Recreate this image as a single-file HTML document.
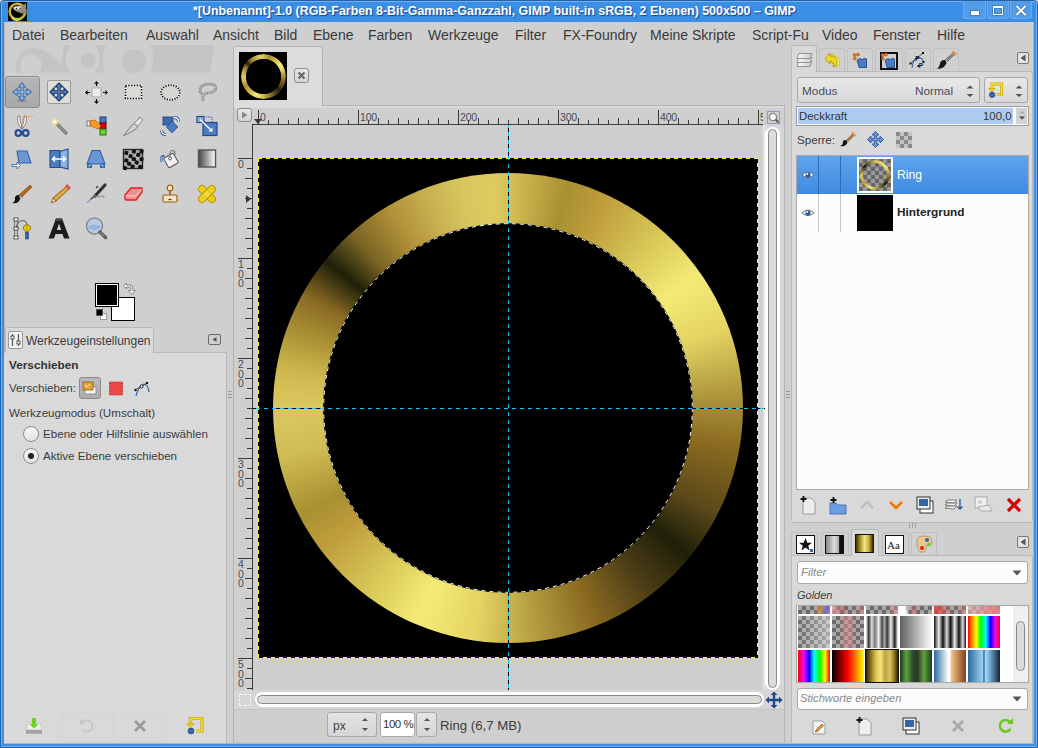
<!DOCTYPE html>
<html><head><meta charset="utf-8">
<style>
*{margin:0;padding:0;box-sizing:border-box}
html,body{width:1038px;height:748px;overflow:hidden;background:#cfcfcf;font-family:"Liberation Sans",sans-serif;font-size:13px;color:#3c3c3c}
.a{position:absolute}
.t{position:absolute;white-space:nowrap;line-height:1}
.m{position:absolute;top:28px;font-size:14px;line-height:1;color:#3a3a3a;white-space:nowrap}
svg{position:absolute;overflow:visible}
</style></head><body>
<div class="a" style="left:0px;top:0px;width:1038px;height:748px;background:#3a8ee6;border:1px solid #2362aa;border-radius:4px 4px 0 0"></div>
<div class="a" style="left:1px;top:1px;width:1036px;height:746px;border:1px solid #74b2f0;border-radius:3px 3px 0 0"></div>
<div class="a" style="left:4px;top:22px;width:1030px;height:722px;background:#cfcfcf;border:1px solid #bcb4ac;border-top-color:#d4ccc4"></div>
<div class="a" style="left:8px;top:2px;width:19px;height:19px;background:#000"></div>
<svg style="left:8px;top:2px;" width="19" height="19" viewBox="0 0 19 19"><circle cx="9.5" cy="9.4" r="7.8" fill="none" stroke="#d4b43a" stroke-width="2.4"/><path d="M3.5 16 A7.8 7.8 0 0 0 13 17" fill="none" stroke="#f0dc60" stroke-width="1.2"/><path d="M5 5.5 Q9 2.5 15 3.5 L18 1 L18.5 12.5 Q14 11.5 11 10.5 Q6.5 9.5 5 5.5Z" fill="#8e8a80"/><ellipse cx="7.8" cy="6.2" rx="2" ry="1.6" fill="#f4f4f4"/><ellipse cx="11.5" cy="5.8" rx="2" ry="1.6" fill="#f4f4f4"/><circle cx="8.3" cy="6.6" r=".8" fill="#111"/><circle cx="12" cy="6.2" r=".8" fill="#111"/><circle cx="15.5" cy="9.5" r="1" fill="#e07020"/></svg>
<div class="t" style="left:193px;top:5px;color:#fff;font-weight:bold;font-size:12.4px;text-shadow:1px 1px 1px rgba(10,30,90,.7)">*[Unbenannt]-1.0 (RGB-Farben 8-Bit-Gamma-Ganzzahl, GIMP built-in sRGB, 2 Ebenen) 500x500 – GIMP</div>
<div class="a" style="left:963px;top:1px;width:23px;height:18px;background:#539de8;border:1px solid #68aaee;border-top:none;border-radius:0 0 3px 3px"></div>
<div class="a" style="left:987px;top:1px;width:22px;height:18px;background:#539de8;border:1px solid #68aaee;border-top:none;border-radius:0 0 3px 3px"></div>
<div class="a" style="left:1010px;top:1px;width:22px;height:18px;background:#539de8;border:1px solid #68aaee;border-top:none;border-radius:0 0 3px 3px"></div>
<div class="a" style="left:971px;top:11px;width:8px;height:4px;background:#fff;box-shadow:0 0 0 .6px #3a6aa0"></div>
<div class="a" style="left:993px;top:6px;width:10px;height:9px;border:1.6px solid #fff;border-top-width:2.4px;box-shadow:0 0 0 .6px #3a6aa0, inset 0 0 0 .6px #3a6aa0"></div>
<svg style="left:1015px;top:5px;" width="12" height="11" viewBox="0 0 12 11"><path d="M1.5 1L10.5 10M10.5 1L1.5 10" stroke="#3a6aa0" stroke-width="3.2"/><path d="M1.5 1L10.5 10M10.5 1L1.5 10" stroke="#fff" stroke-width="2"/></svg>
<div class="m" style="left:12px">Datei</div>
<div class="m" style="left:60px">Bearbeiten</div>
<div class="m" style="left:146px">Auswahl</div>
<div class="m" style="left:213px">Ansicht</div>
<div class="m" style="left:274px">Bild</div>
<div class="m" style="left:313px">Ebene</div>
<div class="m" style="left:368px">Farben</div>
<div class="m" style="left:428px">Werkzeuge</div>
<div class="m" style="left:515px">Filter</div>
<div class="m" style="left:563px">FX-Foundry</div>
<div class="m" style="left:650px">Meine Skripte</div>
<div class="m" style="left:752px">Script-Fu</div>
<div class="m" style="left:822px">Video</div>
<div class="m" style="left:873px">Fenster</div>
<div class="m" style="left:937px">Hilfe</div>
<svg style="left:0px;top:40px;" width="230" height="36" viewBox="0 0 230 36"><defs><clipPath id="wb"><rect x="0" y="5.1" width="230" height="27.6"/></clipPath></defs><g clip-path="url(#wb)"><path d="M15.4 32.7 C15.4 16 22 8.1 32.3 8.1 C45 8.1 55 17 61.2 25 L64.3 5.1 L214.6 5.1 L210.4 32.7 Z" fill="#c4c4c4"/>
<circle cx="30.9" cy="25.4" r="10.9" fill="#cfcfcf"/>
<ellipse cx="82.7" cy="19" rx="17" ry="18.5" fill="#cfcfcf"/><ellipse cx="128" cy="19" rx="25.4" ry="28" fill="#cfcfcf"/>
<circle cx="88.2" cy="20.6" r="7.5" fill="#c4c4c4"/><circle cx="134.2" cy="21.4" r="12.1" fill="#c4c4c4"/></g></svg>
<div class="a" style="left:5px;top:76px;width:35px;height:32px;border:1px solid #8e8e8e;border-radius:3px;background:linear-gradient(#b6b6b6,#a8a8a8);box-shadow:inset 0 1px 0 #c4c4c4"></div>
<svg style="left:9.5px;top:79.5px;" width="24" height="24" viewBox="0 0 24 24"><ellipse cx="12" cy="20.5" rx="5" ry="1.6" fill="#555" opacity=".3"/><path d="M12 2.5 L15.4 7.2 L13 7.2 L13 11 L16.8 11 L16.8 8.6 L21.5 12 L16.8 15.4 L16.8 13 L13 13 L13 16.8 L15.4 16.8 L12 21.5 L8.6 16.8 L11 16.8 L11 13 L7.2 13 L7.2 15.4 L2.5 12 L7.2 8.6 L7.2 11 L11 11 L11 7.2 L8.6 7.2Z" fill="#80aee0" stroke="#2c5ca2" stroke-width=".9" stroke-linejoin="miter"/><path d="M12 5v14M5 12h14" stroke="#a8c8ec" stroke-width=".6"/></svg>
<div class="a" style="left:47px;top:80px;width:24px;height:24px;border:1px solid #9a9a98;border-radius:2px;background:#deded9"></div>
<svg style="left:46.5px;top:79.5px;" width="24" height="24" viewBox="0 0 24 24"><path d="M12 3 L16 7 L13.2 7 L13.2 10.8 L17 10.8 L17 8 L21 12 L17 16 L17 13.2 L13.2 13.2 L13.2 17 L16 17 L12 21 L8 17 L10.8 17 L10.8 13.2 L7 13.2 L7 16 L3 12 L7 8 L7 10.8 L10.8 10.8 L10.8 7 L8 7Z" fill="#4a78b4" stroke="#1e3c6a" stroke-width="1.2" stroke-linejoin="miter"/><path d="M12 5v14M5 12h14" stroke="#6890c4" stroke-width=".8"/></svg>
<svg style="left:84px;top:79.5px;" width="24" height="24" viewBox="0 0 24 24"><rect x="8" y="8" width="9" height="9" rx="1" fill="#ededed" stroke="#aaa"/><path d="M12.5 2v4M12.5 19v4M2 12.5h4M19 12.5h4" stroke="#000" stroke-width="1.2"/><path d="M10.5 3.5l2-2 2 2M10.5 21.5l2 2 2-2M3.5 10.5l-2 2 2 2M21.5 10.5l2 2-2 2" fill="#000" stroke="#000" stroke-width=".8"/></svg>
<svg style="left:121px;top:79.5px;" width="24" height="24" viewBox="0 0 24 24"><rect x="4.5" y="5.5" width="16" height="13" fill="#d9dad6" stroke="#fff" stroke-width="1.6"/><rect x="4.5" y="5.5" width="16" height="13" fill="none" stroke="#000" stroke-width="1.6" stroke-dasharray="1.4 1.4"/></svg>
<svg style="left:158px;top:79.5px;" width="24" height="24" viewBox="0 0 24 24"><ellipse cx="12.5" cy="12.5" rx="9.3" ry="7.3" fill="#d6d7d3" stroke="#fff" stroke-width="1.8"/><ellipse cx="12.5" cy="12.5" rx="9.3" ry="7.3" fill="none" stroke="#111" stroke-width="1.8" stroke-dasharray="1.3 1.3"/></svg>
<svg style="left:195px;top:79.5px;" width="24" height="24" viewBox="0 0 24 24"><path d="M9 21 Q6 18 9 15 Q4 13 5 9 Q7 4 14 4 Q21 4 21 8 Q21 12 13 13 Q8 14 9 15" fill="none" stroke="#888884" stroke-width="2.4"/><path d="M9 21 Q6 18 9 15 Q4 13 5 9 Q7 4 14 4 Q21 4 21 8 Q21 12 13 13 Q8 14 9 15" fill="none" stroke="#e4e4e0" stroke-width="1" stroke-dasharray="1.6 .9"/></svg>
<svg style="left:9.5px;top:113.5px;" width="24" height="24" viewBox="0 0 24 24"><path d="M8 2 Q6 9 12 15 L13 14 Q9 8 10 2Z M16 2 Q18 9 12 15 L11 14 Q15 8 14 2Z" fill="#f6f6f6" stroke="#7a7a7a" stroke-width=".9" stroke-linejoin="round"/><circle cx="8.3" cy="19" r="2.8" fill="none" stroke="#24509a" stroke-width="2.2"/><circle cx="15.7" cy="19" r="2.8" fill="none" stroke="#24509a" stroke-width="2.2"/><path d="M10.5 16 L9.5 17 M13.5 16 L14.5 17" stroke="#24509a" stroke-width="1.6"/><path d="M12.5 11 Q12.5 3 16 2.5 L23 2.5" stroke="#f08a1e" stroke-width="1.1" stroke-dasharray="1.3 1" fill="none"/></svg>
<svg style="left:46.5px;top:113.5px;" width="24" height="24" viewBox="0 0 24 24"><path d="M9 9 L19 19" stroke="#505850" stroke-width="3" stroke-linecap="round"/><path d="M9 9 L19 19" stroke="#a8aca0" stroke-width="1.4" stroke-linecap="round"/><circle cx="8" cy="8" r="3.5" fill="#ffef90" opacity=".6"/><circle cx="8" cy="8" r="1.8" fill="#fffde0"/></svg>
<svg style="left:84px;top:113.5px;" width="24" height="24" viewBox="0 0 24 24"><rect x="16" y="3" width="6" height="6" fill="#4a78b8" stroke="#203d70"/><rect x="16" y="9" width="6" height="6" fill="#d60010" stroke="#7a0008"/><rect x="16" y="15" width="6" height="6" fill="#6ad030" stroke="#287010"/><rect x="3" y="7" width="3" height="5" fill="#fff" stroke="#777"/><path d="M6 7 L11 6 L17 12 L14 15 L7 12Z" fill="#f89c28" stroke="#c86000" stroke-width=".8"/></svg>
<svg style="left:121px;top:113.5px;" width="24" height="24" viewBox="0 0 24 24"><path d="M2.5 22 L10 12 L14 9 L17 12 L14 16Z" fill="#cfcfcb" stroke="#7a7a76" stroke-width=".9" stroke-linejoin="round"/><path d="M13 9.5 L19 3 L22 6 L16.5 12Z" fill="#e8e8e4" stroke="#7a7a76" stroke-width=".9"/><path d="M16 6 L19 4.5" stroke="#aaa" stroke-width="1.2"/></svg>
<svg style="left:158px;top:113.5px;" width="24" height="24" viewBox="0 0 24 24"><rect x="5" y="3" width="10" height="8" fill="#3a6ab0" stroke="#244a88" stroke-width=".9"/><rect x="10" y="9" width="8" height="8" transform="rotate(45 14 13)" fill="#4a7cc0" stroke="#244a88" stroke-width=".9"/><path d="M16 3.5 Q20 3.5 20.5 7.5" fill="none" stroke="#244a88" stroke-width="3"/><path d="M16 3.5 Q20 3.5 20.5 7.5" fill="none" stroke="#fff" stroke-width="1.3"/><path d="M8 20.5 Q4 20.5 3.5 16.5" fill="none" stroke="#244a88" stroke-width="3"/><path d="M8 20.5 Q4 20.5 3.5 16.5" fill="none" stroke="#fff" stroke-width="1.3"/></svg>
<svg style="left:195px;top:113.5px;" width="24" height="24" viewBox="0 0 24 24"><rect x="8" y="8.5" width="14" height="13" fill="#4a7cc0" stroke="#244a88" stroke-width="1.2"/><rect x="2" y="2.5" width="7" height="6" fill="#8ab0e0" stroke="#244a88" stroke-width="1.2"/><path d="M5 5.5 L17 17" stroke="#fff" stroke-width="1.3"/><path d="M13.5 17.5 L17.5 17.5 L17.5 13.5Z" fill="#fff"/><path d="M11 3 h6 v6" stroke="#244a88" stroke-dasharray="1 1" fill="none"/></svg>
<svg style="left:9.5px;top:147px;" width="24" height="24" viewBox="0 0 24 24"><path d="M7 4 L17 4 L21 16 L9 16Z" fill="#6a98d4" stroke="#3465a4" stroke-width="1.1"/><path d="M2 17.5 L7 17.5 L7 15 L10.5 18.5 L7 22 L7 19.5 L2 19.5Z" fill="#fff" stroke="#3465a4" stroke-width=".9"/></svg>
<svg style="left:46.5px;top:147px;" width="24" height="24" viewBox="0 0 24 24"><path d="M3 3.5 L13 3.5 L13 20.5 L3 20.5Z" fill="#4a7cc0" stroke="#244a88" stroke-width="1.1"/><path d="M13 4.5 L21 2 L21 22 L13 20Z" fill="#8ab4e4" stroke="#244a88" stroke-width="1.1"/><path d="M6 12 h12 M8 9.5 l-2.5 2.5 2.5 2.5 M16 9.5 l2.5 2.5 -2.5 2.5" stroke="#fff" stroke-width="1.6" fill="none"/></svg>
<svg style="left:84px;top:147px;" width="24" height="24" viewBox="0 0 24 24"><path d="M8 3.5 L16 3.5 L21 17 L3 17Z" fill="#6a98d4" stroke="#3465a4" stroke-width="1.1"/><rect x="3" y="16" width="5" height="5" fill="#3a6ab0"/><rect x="16" y="16" width="5" height="5" fill="#3a6ab0"/><path d="M4.5 19.5 l2 -2 M17.5 17.5 l2 2" stroke="#fff"/></svg>
<svg style="left:121px;top:147px;" width="24" height="24" viewBox="0 0 24 24"><rect x="2.5" y="2.5" width="19" height="19" fill="#b0b0ac" stroke="#2a2a2a" stroke-width="1.4"/><svg x="3.2" y="3.2" width="17.6" height="17.6" viewBox="3.2 3.2 17.6 17.6"><rect x="3.4" y="3.9" width="3.9" height="3.9" rx=".8" transform="rotate(15 5.3 5.8)" fill="#111"/><rect x="3.4" y="11.5" width="3.9" height="3.9" rx=".8" transform="rotate(15 5.3 13.4)" fill="#111"/><rect x="2.1" y="19.1" width="3.9" height="3.9" rx=".8" transform="rotate(15 4.0 21.0)" fill="#111"/><rect x="7.7" y="7.2" width="3.9" height="3.9" rx=".8" transform="rotate(15 9.6 9.1)" fill="#111"/><rect x="6.2" y="14.8" width="3.9" height="3.9" rx=".8" transform="rotate(15 8.1 16.7)" fill="#111"/><rect x="11.0" y="2.5" width="3.9" height="3.9" rx=".8" transform="rotate(15 12.9 4.4)" fill="#111"/><rect x="11.0" y="10.1" width="3.9" height="3.9" rx=".8" transform="rotate(15 12.9 12.0)" fill="#111"/><rect x="9.7" y="17.7" width="3.9" height="3.9" rx=".8" transform="rotate(15 11.6 19.6)" fill="#111"/><rect x="15.3" y="5.9" width="3.9" height="3.9" rx=".8" transform="rotate(15 17.2 7.8)" fill="#111"/><rect x="13.8" y="13.5" width="3.9" height="3.9" rx=".8" transform="rotate(15 15.7 15.4)" fill="#111"/><rect x="18.6" y="2.7" width="3.9" height="3.9" rx=".8" transform="rotate(15 20.5 4.6)" fill="#111"/><rect x="18.6" y="10.3" width="3.9" height="3.9" rx=".8" transform="rotate(15 20.5 12.2)" fill="#111"/><rect x="17.3" y="17.9" width="3.9" height="3.9" rx=".8" transform="rotate(15 19.2 19.8)" fill="#111"/></svg></svg>
<svg style="left:158px;top:147px;" width="24" height="24" viewBox="0 0 24 24"><path d="M3.5 9 L6.5 9 M3.5 9 V15" stroke="#3d6aa6" stroke-width="2.2" fill="none"/><path d="M3.5 9 V15" stroke="#7aa0d8" stroke-width="1"/><rect x="7.5" y="8" width="11" height="11" rx="1" transform="rotate(-30 13 13.5)" fill="#f2f2f2" stroke="#555" stroke-width="1"/><circle cx="12" cy="11.5" r="1.5" fill="none" stroke="#666"/><path d="M12 10 Q11.5 3.5 14.5 3.5 Q17.5 3.5 17 8" fill="none" stroke="#777" stroke-width="1.1"/></svg>
<svg style="left:195px;top:147px;" width="24" height="24" viewBox="0 0 24 24"><defs><linearGradient id="bl" x1="0" x2="1"><stop offset="0" stop-color="#444"/><stop offset="1" stop-color="#fff"/></linearGradient></defs><rect x="3.5" y="3" width="17" height="17" fill="url(#bl)" stroke="#555" stroke-width="1.4"/></svg>
<svg style="left:9.5px;top:181.5px;" width="24" height="24" viewBox="0 0 24 24"><path d="M20 3 L22 5 L12 15 L9 13Z" fill="#b06a20" stroke="#7a4410" stroke-width=".6"/><path d="M9 13 L12 16 L10 17Z" fill="#ccc" stroke="#888" stroke-width=".6"/><path d="M9 13 Q4 13 5 18 Q4 21 2 21 Q9 22 10 17Z" fill="#111"/></svg>
<svg style="left:46.5px;top:181.5px;" width="24" height="24" viewBox="0 0 24 24"><path d="M20 4 L22 7 L9 19 L6 16Z" fill="#e0a840" stroke="#8a5a10" stroke-width="1"/><path d="M19 3 L23 7" stroke="#e05060" stroke-width="3"/><path d="M6 16 L9 19 L4 21Z" fill="#f0d8a0" stroke="#8a5a10" stroke-width=".8"/></svg>
<svg style="left:84px;top:181.5px;" width="24" height="24" viewBox="0 0 24 24"><path d="M21 3 L11 14" stroke="#333" stroke-width="3.2" stroke-linecap="round"/><path d="M12 13 L8 17 Q6 18 7 16Z" fill="#ccc" stroke="#555"/><path d="M11 14 Q14 16 18 14 Q21 14 20 16" fill="none" stroke="#888"/><path d="M7 17 L3 21" stroke="#5a90d0" stroke-width="1.5" opacity=".7"/><path d="M14 4 L12 6" stroke="#444" stroke-width="1.4"/></svg>
<svg style="left:121px;top:181.5px;" width="24" height="24" viewBox="0 0 24 24"><path d="M4 13 L10 6 L21 6 L21 10 L15 18 L5 18 L4 17Z" fill="#f29090" stroke="#e02020" stroke-width="1.4" stroke-linejoin="round"/><path d="M4 14 L15 14 L21 7" fill="none" stroke="#fff" stroke-width=".8" opacity=".7"/></svg>
<svg style="left:158px;top:181.5px;" width="24" height="24" viewBox="0 0 24 24"><circle cx="12" cy="6" r="2.8" fill="#f4e8c8" stroke="#a06010" stroke-width="1.2"/><path d="M12 9 v4" stroke="#a06010" stroke-width="1.6"/><rect x="5" y="13" width="14" height="7" rx="1.5" fill="#f0e6c6" stroke="#a06010" stroke-width="1.2"/><path d="M10 17 h4 l-2 1.5z" fill="#222"/></svg>
<svg style="left:195px;top:181.5px;" width="24" height="24" viewBox="0 0 24 24"><g fill="#ecd020" stroke="#b89a00" stroke-width="1"><rect x="1.5" y="8.5" width="21" height="7" rx="3.5" transform="rotate(45 12 12)"/><rect x="1.5" y="8.5" width="21" height="7" rx="3.5" transform="rotate(-45 12 12)"/></g><rect x="9" y="9" width="6" height="6" transform="rotate(45 12 12)" fill="#f4dc40" stroke="#c8a800" stroke-width=".6"/></svg>
<svg style="left:9.5px;top:216px;" width="24" height="24" viewBox="0 0 24 24"><path d="M6 3 V22" stroke="#333" stroke-width="3"/><path d="M6 3 V22" stroke="#fff" stroke-width="1.4"/><rect x="4" y="2" width="4" height="3" fill="#fff" stroke="#333" stroke-width=".8"/><rect x="4" y="11" width="4" height="3" fill="#fff" stroke="#333" stroke-width=".8"/><rect x="4" y="20" width="4" height="3" fill="#fff" stroke="#333" stroke-width=".8"/><path d="M6 12 Q8 3 15 5 Q17 6 17 10" fill="none" stroke="#555" stroke-width="1"/><path d="M13.5 13 Q13 9 17 9 Q21 9 20.5 13 L17 16.5Z" fill="#f4d400" stroke="#806000" stroke-width=".9"/><path d="M17 10.5 V14" stroke="#806000" stroke-width=".8"/><rect x="15.5" y="16" width="3" height="7" fill="#3465a4" stroke="#1a3a70" stroke-width=".6"/></svg>
<svg style="left:46.5px;top:216px;" width="24" height="24" viewBox="0 0 24 24"><path d="M1.5 22.5 L9 2.5 L15 2.5 L22.5 22.5 L17 22.5 L15.5 18 L8.5 18 L7 22.5Z M9.8 14 L14.2 14 L12 7.5Z" fill="#1c1c1c" fill-rule="evenodd"/><path d="M9 2.5 L15 2.5 L16 5 L8 5Z" fill="#444"/></svg>
<svg style="left:84px;top:216px;" width="24" height="24" viewBox="0 0 24 24"><circle cx="10.5" cy="10" r="8" fill="#b4cce8" stroke="#8a8a8a" stroke-width="1.5"/><path d="M3.5 10.5 Q10.5 7 17.5 10.5 L17.5 11 Q10.5 17 3.5 11Z" fill="#98b4dc"/><path d="M16 16 L21.5 21.5" stroke="#5a5a5a" stroke-width="3.4" stroke-linecap="round"/><path d="M16.5 16.5 L21 21" stroke="#bbb" stroke-width="1.2" stroke-dasharray="1 1"/></svg>
<div class="a" style="left:111px;top:297px;width:24px;height:24px;background:#fff;border:1px solid #000"></div>
<div class="a" style="left:95px;top:283px;width:24px;height:24px;background:#000;border:1px solid #000;box-shadow:inset 0 0 0 1px #fff"></div>
<div class="a" style="left:100px;top:313px;width:7px;height:7px;background:#fff;border:1px solid #999"></div>
<div class="a" style="left:96px;top:309px;width:7px;height:7px;background:#000;border:1px solid #555"></div>
<svg style="left:123px;top:281px;" width="14" height="15" viewBox="0 0 14 15"><path d="M0.5 5 L3.5 2 L3.5 4 L6.5 4 Q9.8 4 9.8 7 L9.8 9.5 L12.3 9.5 L8.8 13.5 L5.3 9.5 L7.8 9.5 L7.8 7 Q7.8 6 6.5 6 L3.5 6 L3.5 8Z" fill="#fafafa" stroke="#7a7a7a" stroke-width=".9" stroke-linejoin="round"/></svg>
<div class="a" style="left:4px;top:352px;width:223px;height:391px;background:#d9d9d9;border:1px solid #b9b9b9;border-bottom:none;border-left-color:#dcdcdc"></div>
<div class="a" style="left:5px;top:327px;width:149px;height:26px;background:#d9d9d9;border:1px solid #b9b9b9;border-bottom:none;border-radius:3px 3px 0 0"></div>
<div class="a" style="left:8px;top:331px;width:15px;height:18px;border:1px solid #999;border-radius:2px;background:#f2f2f2"></div>
<svg style="left:8px;top:331px;" width="15" height="18" viewBox="0 0 15 18"><path d="M4.5 3v12M10.5 3v12" stroke="#555" stroke-width="1.2"/><rect x="3" y="5" width="3" height="3" fill="#fff" stroke="#555"/><rect x="9" y="10" width="3" height="3" fill="#fff" stroke="#555"/></svg>
<div class="t" style="left:26px;top:335px;font-size:12px;color:#3a3a3a">Werkzeugeinstellungen</div>
<div class="a" style="left:208px;top:334px;width:13px;height:11px;border:1px solid #6a6a6a;border-radius:2px"></div>
<svg style="left:208px;top:334px;" width="13" height="11" viewBox="0 0 13 11"><path d="M8.5 3 L4.5 5.5 L8.5 8Z" fill="#555"/></svg>
<div class="t" style="left:9px;top:360px;font-weight:bold;font-size:11.8px;color:#333">Verschieben</div>
<div class="t" style="left:9px;top:382px;font-size:11.6px">Verschieben:</div>
<div class="a" style="left:79px;top:377px;width:22px;height:22px;border:1px solid #8a8a8a;border-radius:3px;background:linear-gradient(#bababa,#acacac)"></div>
<svg style="left:79px;top:377px;" width="22" height="22" viewBox="0 0 22 22"><rect x="6" y="10" width="11" height="7" fill="#f4f4f4" stroke="#888" stroke-width=".8"/><rect x="4" y="5" width="10" height="8" fill="#e8a030" stroke="#806020" stroke-width=".8"/><path d="M6 8 l2 2 3-3" stroke="#fff" stroke-width=".8" fill="none"/></svg>
<svg style="left:108px;top:380px;" width="16" height="16" viewBox="0 0 16 16"><rect x="1.5" y="2" width="13" height="13" fill="#e84848" stroke="#c02020" stroke-width="1" stroke-dasharray="1 1"/></svg>
<svg style="left:133px;top:379px;" width="18" height="18" viewBox="0 0 18 18"><path d="M3 17 Q5 8 11 5 Q15 6 16 13" fill="none" stroke="#3465a4" stroke-width="1.2"/><path d="M2 11 L14 4" stroke="#333" stroke-width=".8"/><circle cx="2.5" cy="11" r="1.2" fill="#111"/><circle cx="14" cy="4" r="1.2" fill="#111"/><circle cx="8.5" cy="7.5" r="1.5" fill="#fff" stroke="#111"/></svg>
<div class="t" style="left:9px;top:407px;font-size:11.6px">Werkzeugmodus (Umschalt)</div>
<div class="a" style="left:23px;top:426px;width:16px;height:16px;border:1px solid #8a8a8a;border-radius:50%;background:linear-gradient(#f8f8f8,#e2e2e2)"></div>
<div class="t" style="left:43px;top:428px;font-size:11.6px">Ebene oder Hilfslinie auswählen</div>
<div class="a" style="left:23px;top:448px;width:16px;height:16px;border:1px solid #8a8a8a;border-radius:50%;background:linear-gradient(#f8f8f8,#e2e2e2)"></div>
<div class="a" style="left:28px;top:453px;width:6px;height:6px;border-radius:50%;background:#1e1e1e"></div>
<div class="t" style="left:43px;top:450px;font-size:11.6px">Aktive Ebene verschieben</div>
<div class="a" style="left:62px;top:712px;width:52px;height:30px;border:1px solid #d4d4d4;border-radius:2px"></div>
<div class="a" style="left:114px;top:712px;width:52px;height:30px;border:1px solid #d4d4d4;border-radius:2px"></div>
<svg style="left:22px;top:714px;" width="24" height="24" viewBox="0 0 24 24"><path d="M4 16 L5 10 Q12 7 19 10 L20 16Z" fill="#ececec" stroke="#9a9a9a" stroke-width=".8" stroke-dasharray="1.2 1.2"/><rect x="4" y="16" width="16" height="3.8" fill="#a4a4a4"/><path d="M10 4 h4 v6 h2.5 L12 14.5 L7.5 10 H10Z" fill="#6ad41e"/></svg>
<svg style="left:75px;top:714px;" width="24" height="24" viewBox="0 0 24 24"><path d="M8 8 A5.5 5.5 0 1 1 8 16" fill="none" stroke="#c6c6c2" stroke-width="2"/><path d="M5 5 L10 9 L5 11Z" fill="#c6c6c2"/></svg>
<svg style="left:128px;top:714px;" width="24" height="24" viewBox="0 0 24 24"><path d="M7 7 L17 17 M17 7 L7 17" stroke="#9a9a9a" stroke-width="2.8"/></svg>
<svg style="left:183px;top:714px;" width="24" height="24" viewBox="0 0 24 24"><path d="M13 17 H19 V4.5 H7.5 V10" fill="none" stroke="#c8a800" stroke-width="3.2"/><path d="M13 17 H19 V4.5 H7.5 V10" fill="none" stroke="#f6e040" stroke-width="1.6"/><path d="M3.8 9.8 L11.2 9.8 L7.5 13.6Z" fill="#f0d020" stroke="#c8a800" stroke-width=".8"/><circle cx="8" cy="17" r="2.9" fill="#3a6ab0" stroke="#1e4488" stroke-width=".8"/></svg>
<div class="a" style="left:228px;top:391px;width:4px;height:1px;background:#9a9a9a"></div>
<div class="a" style="left:228px;top:394px;width:4px;height:1px;background:#9a9a9a"></div>
<div class="a" style="left:228px;top:397px;width:4px;height:1px;background:#9a9a9a"></div>
<div class="a" style="left:226px;top:352px;width:1px;height:391px;background:#b9b9b9"></div>
<div class="a" style="left:233px;top:46px;width:90px;height:61px;background:#dcdcdc;border:1px solid #b5b5b5;border-bottom:none;border-radius:3px 3px 0 0"></div>
<div class="a" style="left:233px;top:105px;width:552px;height:638px;background:#d9d9d9;border:1px solid #b3b3b3;border-bottom-color:#c8c8c8"></div>
<div class="a" style="left:234px;top:105px;width:88px;height:3px;background:#dcdcdc"></div>
<div class="a" style="left:239px;top:52px;width:48px;height:48px;background:#000"></div>
<div class="a" style="left:240.5px;top:53.5px;width:45px;height:45px;border-radius:50%;background:conic-gradient(from 0deg,#d6c058 0deg,#a89030 15deg,#bf9d3c 25deg,#d6c656 40deg,#f5ea78 55deg,#e4d462 70deg,#b39c40 85deg,#8a6a20 100deg,#5a4818 117deg,#1e2008 129deg,#4a3c16 142deg,#8a6a20 158deg,#b39c40 173deg,#e4d462 188deg,#f5ea78 203deg,#d6c656 218deg,#bf9d3c 233deg,#a89030 243deg,#d0bc54 258deg,#dcc860 270deg,#d0b850 279deg,#b09838 288deg,#8a6a24 299deg,#1e2008 309deg,#7a6424 318deg,#b09038 329deg,#c8b050 339deg,#d6c65e 348deg,#dccc60 356deg,#d6c058 360deg);-webkit-mask:radial-gradient(circle,transparent 17.2px,#000 18px);mask:radial-gradient(circle,transparent 17.2px,#000 18px)"></div>
<div class="a" style="left:294px;top:68px;width:15px;height:15px;border:1px solid #8c8c8c;border-radius:3px;background:linear-gradient(#e8e8e8,#d4d4d4)"></div>
<svg style="left:294px;top:68px;" width="15" height="15" viewBox="0 0 15 15"><path d="M4.5 4.5 L10.5 10.5 M10.5 4.5 L4.5 10.5" stroke="#666" stroke-width="2.2"/></svg>
<div class="a" style="left:234px;top:108px;width:550px;height:17px;background:#cfcfcf"></div>
<div class="a" style="left:234px;top:108px;width:18px;height:582px;background:#cfcfcf"></div>
<div class="a" style="left:252px;top:124px;width:511px;height:1px;background:#3a3a3a"></div>
<div class="a" style="left:252px;top:125px;width:1px;height:565px;background:#3a3a3a"></div>
<div class="a" style="left:237px;top:108px;width:15px;height:14px;border:1px solid #8a8a8a;border-radius:3px;background:linear-gradient(#e6e6e6,#d2d2d2)"></div>
<svg style="left:237px;top:108px;" width="15" height="14" viewBox="0 0 15 14"><path d="M5 3.5 L10.5 7 L5 10.5Z" fill="#888"/></svg>
<svg style="left:0px;top:0px;" width="1038" height="748" viewBox="0 0 1038 748"><path d="M258.5 110V124 M268.5 120V124 M278.5 118V124 M288.5 120V124 M298.5 118V124 M308.5 120V124 M318.5 118V124 M328.5 120V124 M338.5 118V124 M348.5 120V124 M358.5 110V124 M368.5 120V124 M378.5 118V124 M388.5 120V124 M398.5 118V124 M408.5 120V124 M418.5 118V124 M428.5 120V124 M438.5 118V124 M448.5 120V124 M458.5 110V124 M468.5 120V124 M478.5 118V124 M488.5 120V124 M498.5 118V124 M508.5 120V124 M518.5 118V124 M528.5 120V124 M538.5 118V124 M548.5 120V124 M558.5 110V124 M568.5 120V124 M578.5 118V124 M588.5 120V124 M598.5 118V124 M608.5 120V124 M618.5 118V124 M628.5 120V124 M638.5 118V124 M648.5 120V124 M658.5 110V124 M668.5 120V124 M678.5 118V124 M688.5 120V124 M698.5 118V124 M708.5 120V124 M718.5 118V124 M728.5 120V124 M738.5 118V124 M748.5 120V124 M758.5 110V124" stroke="#3a3a3a" stroke-width="1"/></svg>
<div class="a" style="left:252px;top:108px;width:511px;height:16px;overflow:hidden">
<div class="t" style="left:8px;top:4px;font-size:10.5px;color:#4a4a5a;letter-spacing:-0.2px">0</div>
<div class="t" style="left:108px;top:4px;font-size:10.5px;color:#4a4a5a;letter-spacing:-0.2px">100</div>
<div class="t" style="left:208px;top:4px;font-size:10.5px;color:#4a4a5a;letter-spacing:-0.2px">200</div>
<div class="t" style="left:308px;top:4px;font-size:10.5px;color:#4a4a5a;letter-spacing:-0.2px">300</div>
<div class="t" style="left:408px;top:4px;font-size:10.5px;color:#4a4a5a;letter-spacing:-0.2px">400</div>
<div class="t" style="left:508px;top:4px;font-size:10.5px;color:#4a4a5a;letter-spacing:-0.2px">500</div>
</div>
<svg style="left:0px;top:0px;" width="1038" height="748" viewBox="0 0 1038 748"><path d="M238 158.5H252 M247 168.5H252 M245 178.5H252 M247 188.5H252 M245 198.5H252 M247 208.5H252 M245 218.5H252 M247 228.5H252 M245 238.5H252 M247 248.5H252 M238 258.5H252 M247 268.5H252 M245 278.5H252 M247 288.5H252 M245 298.5H252 M247 308.5H252 M245 318.5H252 M247 328.5H252 M245 338.5H252 M247 348.5H252 M238 358.5H252 M247 368.5H252 M245 378.5H252 M247 388.5H252 M245 398.5H252 M247 408.5H252 M245 418.5H252 M247 428.5H252 M245 438.5H252 M247 448.5H252 M238 458.5H252 M247 468.5H252 M245 478.5H252 M247 488.5H252 M245 498.5H252 M247 508.5H252 M245 518.5H252 M247 528.5H252 M245 538.5H252 M247 548.5H252 M238 558.5H252 M247 568.5H252 M245 578.5H252 M247 588.5H252 M245 598.5H252 M247 608.5H252 M245 618.5H252 M247 628.5H252 M245 638.5H252 M247 648.5H252 M238 658.5H252 M247 668.5H252 M245 678.5H252 M247 688.5H252" stroke="#3a3a3a" stroke-width="1"/></svg>
<div class="a" style="left:234px;top:125px;width:18px;height:564px;overflow:hidden">
<div class="t" style="left:3px;top:35px;font-size:10.5px;line-height:9.6px;color:#4a4a5a;white-space:pre;text-align:center;width:8px">0</div>
<div class="t" style="left:3px;top:135px;font-size:10.5px;line-height:9.6px;color:#4a4a5a;white-space:pre;text-align:center;width:8px">1<br>0<br>0</div>
<div class="t" style="left:3px;top:235px;font-size:10.5px;line-height:9.6px;color:#4a4a5a;white-space:pre;text-align:center;width:8px">2<br>0<br>0</div>
<div class="t" style="left:3px;top:335px;font-size:10.5px;line-height:9.6px;color:#4a4a5a;white-space:pre;text-align:center;width:8px">3<br>0<br>0</div>
<div class="t" style="left:3px;top:435px;font-size:10.5px;line-height:9.6px;color:#4a4a5a;white-space:pre;text-align:center;width:8px">4<br>0<br>0</div>
<div class="t" style="left:3px;top:535px;font-size:10.5px;line-height:9.6px;color:#4a4a5a;white-space:pre;text-align:center;width:8px">5<br>0<br>0</div>
</div>
<svg style="left:253px;top:118px;" width="10" height="7" viewBox="0 0 10 7"><path d="M1 1 L9 1 L5 6Z" fill="#333"/></svg>
<svg style="left:245px;top:194px;" width="7" height="10" viewBox="0 0 7 10"><path d="M1 1 L6 5 L1 9Z" fill="#333"/></svg>
<div class="a" style="left:253px;top:125px;width:512px;height:565px;background:#cfcfcf"></div>
<div class="a" style="left:258px;top:158px;width:500px;height:500px;background:#000;overflow:hidden">
<div class="a" style="left:15px;top:15px;width:470px;height:470px;border-radius:50%;background:conic-gradient(from 0deg,#d6c058 0deg,#a89030 15deg,#bf9d3c 25deg,#d6c656 40deg,#f5ea78 55deg,#e4d462 70deg,#b39c40 85deg,#8a6a20 100deg,#5a4818 117deg,#1e2008 129deg,#4a3c16 142deg,#8a6a20 158deg,#b39c40 173deg,#e4d462 188deg,#f5ea78 203deg,#d6c656 218deg,#bf9d3c 233deg,#a89030 243deg,#d0bc54 258deg,#dcc860 270deg,#d0b850 279deg,#b09838 288deg,#8a6a24 299deg,#1e2008 309deg,#7a6424 318deg,#b09038 329deg,#c8b050 339deg,#d6c65e 348deg,#dccc60 356deg,#d6c058 360deg)"></div>
<div class="a" style="left:65px;top:65px;width:370px;height:370px;border-radius:50%;background:#000"></div>
<svg style="left:0;top:0" width="500" height="500"><circle cx="250" cy="250" r="184.3" fill="none" stroke="#fff" stroke-width="1" stroke-dasharray="4 4"/></svg>
</div>
<svg style="left:0px;top:0px;" width="1038" height="748" viewBox="0 0 1038 748"><g stroke="#ffff00" stroke-dasharray="4 4" fill="none"><path d="M258 158.5H758"/><path d="M757.5 158V658" stroke-dashoffset="3"/><path d="M258 657.5H758" stroke-dashoffset="3"/><path d="M258.5 158V658"/></g></svg>
<div class="a" style="left:762px;top:125px;width:4px;height:565px;background:linear-gradient(90deg,#d0d0d0,#e8e8e8 60%,#f8f8f8)"></div>
<svg style="left:0px;top:0px;" width="1038" height="748" viewBox="0 0 1038 748"><path d="M508.5 125V690" stroke="#000"/><path d="M508.5 125V690" stroke="#00ccff" stroke-dasharray="4 4" stroke-dashoffset="1"/><path d="M253 408.5H765" stroke="#000"/><path d="M253 408.5H765" stroke="#00ccff" stroke-dasharray="4 4" stroke-dashoffset="5"/></svg>
<div class="a" style="left:765px;top:125px;width:19px;height:565px;background:#d6d6d6"></div>
<div class="a" style="left:765px;top:127px;width:15px;height:563px;border-radius:8px;background:#fff"></div>
<div class="a" style="left:768px;top:129px;width:9px;height:559px;border:1px solid #8a8a8a;border-radius:5px;background:#dcdcdc"></div>
<div class="a" style="left:253px;top:690px;width:531px;height:19px;background:#d6d6d6"></div>
<div class="a" style="left:255px;top:692px;width:509px;height:15px;border-radius:8px;background:#fff"></div>
<div class="a" style="left:257px;top:695px;width:505px;height:9px;border:1px solid #8a8a8a;border-radius:5px;background:#dcdcdc"></div>
<div class="a" style="left:234px;top:690px;width:19px;height:19px;background:#d6d6d6"></div>
<div class="a" style="left:239px;top:694px;width:12px;height:12px;border:1px dashed #f4f4f4"></div>
<div class="a" style="left:234px;top:709px;width:550px;height:1px;background:#c4c4c4"></div>
<svg style="left:767px;top:111px;" width="13" height="13" viewBox="0 0 13 13"><rect x=".5" y=".5" width="12" height="12" fill="none" stroke="#4a6aa0" stroke-dasharray="1 1"/><circle cx="6" cy="6" r="3.6" fill="#fff" stroke="#888" stroke-width="1.4"/><path d="M8.5 8.5 L11.5 11.5" stroke="#555" stroke-width="1.8"/></svg>
<svg style="left:764px;top:690px;" width="20" height="20" viewBox="0 0 20 20"><path d="M10 1.5 L13.5 5 L11.2 5 L11.2 8.8 L15 8.8 L15 6.5 L18.5 10 L15 13.5 L15 11.2 L11.2 11.2 L11.2 15 L13.5 15 L10 18.5 L6.5 15 L8.8 15 L8.8 11.2 L5 11.2 L5 13.5 L1.5 10 L5 6.5 L5 8.8 L8.8 8.8 L8.8 5 L6.5 5Z" fill="#1f4a8a"/></svg>
<div class="a" style="left:234px;top:710px;width:550px;height:32px;background:#cfcfcf"></div>
<div class="a" style="left:327px;top:712px;width:50px;height:25px;border:1px solid #a8a8a8;border-radius:3px;background:linear-gradient(#e4e4e4,#d6d6d6)"></div>
<div class="t" style="left:333px;top:720px;font-size:12px;color:#444">px</div>
<svg style="left:360px;top:715px;" width="10" height="20" viewBox="0 0 10 20"><path d="M2 6 L5 3 L8 6Z M2 13 L5 16 L8 13Z" fill="#555"/></svg>
<div class="a" style="left:380px;top:712px;width:35px;height:25px;border:1px solid #a8a8a8;border-radius:3px;background:#fff"></div>
<div class="t" style="left:383px;top:719px;font-size:11.5px;color:#333;letter-spacing:-0.5px">100 %</div>
<div class="a" style="left:416px;top:712px;width:21px;height:25px;border:1px solid #a8a8a8;border-radius:3px;background:linear-gradient(#e4e4e4,#d6d6d6)"></div>
<svg style="left:422px;top:715px;" width="10" height="20" viewBox="0 0 10 20"><path d="M2 6 L5 3 L8 6Z M2 13 L5 16 L8 13Z" fill="#555"/></svg>
<div class="t" style="left:440px;top:719px;font-size:13.2px;color:#3c3c3c">Ring (6,7 MB)</div>
<div class="a" style="left:785px;top:105px;width:6px;height:638px;background:#cfcfcf"></div>
<div class="a" style="left:786px;top:391px;width:4px;height:1px;background:#9a9a9a"></div>
<div class="a" style="left:786px;top:394px;width:4px;height:1px;background:#9a9a9a"></div>
<div class="a" style="left:786px;top:397px;width:4px;height:1px;background:#9a9a9a"></div>
<div class="a" style="left:819px;top:48px;width:26px;height:24px;background:#d0d0d0;border:1px solid #c0c0c0;border-bottom:none;border-radius:3px 3px 0 0"></div>
<div class="a" style="left:847px;top:48px;width:26px;height:24px;background:#d0d0d0;border:1px solid #c0c0c0;border-bottom:none;border-radius:3px 3px 0 0"></div>
<div class="a" style="left:875px;top:48px;width:28px;height:24px;background:#d0d0d0;border:1px solid #c0c0c0;border-bottom:none;border-radius:3px 3px 0 0"></div>
<div class="a" style="left:905px;top:48px;width:26px;height:24px;background:#d0d0d0;border:1px solid #c0c0c0;border-bottom:none;border-radius:3px 3px 0 0"></div>
<div class="a" style="left:933px;top:48px;width:26px;height:24px;background:#d0d0d0;border:1px solid #c0c0c0;border-bottom:none;border-radius:3px 3px 0 0"></div>
<div class="a" style="left:791px;top:71px;width:242px;height:452px;background:#d9d9d9;border:1px solid #b9b9b9;border-radius:0 3px 3px 3px"></div>
<div class="a" style="left:791px;top:45px;width:26px;height:27px;background:#d9d9d9;border:1px solid #b9b9b9;border-bottom:none;border-radius:3px 3px 0 0"></div>
<svg style="left:792px;top:47px;" width="24" height="24" viewBox="0 0 24 24"><defs><linearGradient id="lg" x1="0" x2="1"><stop offset="0" stop-color="#fff"/><stop offset="1" stop-color="#c8c8c8"/></linearGradient></defs><g stroke="#8a8a8a" stroke-width=".9" fill="url(#lg)"><path d="M7 14.5 L20 14.5 L18 19.5 L5 19.5Z"/><path d="M7 10.5 L20 10.5 L18 15.5 L5 15.5Z"/><path d="M7 6.5 L20 6.5 L18 11.5 L5 11.5Z"/></g></svg>
<svg style="left:820px;top:48px;" width="24" height="24" viewBox="0 0 24 24"><path d="M13 8 Q20 8 20 14 Q20 18 16 19 Q18 14 13 13 L13 16 L8 10.5 L13 5Z" fill="#ede080" stroke="#c8b440" stroke-width=".8"/><path d="M10 8 Q17 8 17 14 Q17 18 13 19 Q15 14 10 13 L10 16 L5 10.5 L10 5Z" fill="#f0d820" stroke="#b09000" stroke-width=".8"/></svg>
<svg style="left:848px;top:48px;" width="24" height="24" viewBox="0 0 24 24"><path d="M9 12.5 Q11 9.5 14.5 11.5 Q16.5 9.5 18.5 11 L18.5 19.5 L11 19.5 Q10.5 16 9 12.5Z" fill="#4a7cc0" stroke="#1e4a8a" stroke-width=".9"/><circle cx="6.5" cy="7" r="1.5" fill="#f07a20" stroke="#a04000" stroke-width=".5"/><circle cx="10" cy="6.5" r="1.5" fill="#f07a20" stroke="#a04000" stroke-width=".5"/><circle cx="6.8" cy="10.5" r="1.5" fill="#f07a20" stroke="#a04000" stroke-width=".5"/><path d="M8 7 L8.5 7" stroke="#a04000" stroke-width=".6"/></svg>
<div class="a" style="left:880px;top:52px;width:18px;height:18px;border:2px solid #111"></div>
<svg style="left:876px;top:48px;" width="24" height="24" viewBox="0 0 24 24"><path d="M9 12.5 Q11 9.5 14.5 11.5 Q16.5 9.5 18.5 11 L18.5 19.5 L11 19.5 Q10.5 16 9 12.5Z" fill="#4a7cc0" stroke="#1e4a8a" stroke-width=".9"/><circle cx="6.5" cy="7" r="1.5" fill="#f07a20" stroke="#a04000" stroke-width=".5"/><circle cx="10" cy="6.5" r="1.5" fill="#f07a20" stroke="#a04000" stroke-width=".5"/><circle cx="6.8" cy="10.5" r="1.5" fill="#f07a20" stroke="#a04000" stroke-width=".5"/><path d="M8 7 L8.5 7" stroke="#a04000" stroke-width=".6"/></svg>
<svg style="left:906px;top:48px;" width="24" height="24" viewBox="0 0 24 24"><path d="M6 20 Q7 10 12 9.5 Q17 9.5 17 14" fill="none" stroke="#3465a4" stroke-width="1.1"/><path d="M4.5 15.5 L17 5" stroke="#333" stroke-width=".8"/><rect x="3.5" y="14.5" width="2" height="2" fill="#111"/><rect x="16" y="4" width="2" height="2" fill="#111"/><rect x="16.5" y="13" width="2" height="2" fill="#111"/><rect x="11.5" y="17" width="2" height="2" fill="#111"/><text x="9.2" y="12.5" font-size="6.5" font-family="Liberation Sans" font-weight="bold" fill="#111">P</text><text x="12.8" y="20" font-size="6.5" font-family="Liberation Sans" font-weight="bold" fill="#111">P</text></svg>
<svg style="left:934px;top:48px;" width="24" height="24" viewBox="0 0 24 24"><path d="M19.5 4.5 L21 6 L13.5 13.5 L11.5 11.5Z" fill="#8a8a86" stroke="#555" stroke-width=".6"/><path d="M18.5 3.5 L22 7" stroke="#e09050" stroke-width="2.6"/><path d="M11.5 11.5 L13.5 13.5 L11.5 15Z" fill="#ddd" stroke="#777" stroke-width=".5"/><path d="M11 12 Q6 12 6 16 Q5.5 19 3 20.5 Q10 21.5 12.5 15Z" fill="#151515"/></svg>
<div class="a" style="left:1017px;top:52px;width:12px;height:12px;border:1px solid #777;border-radius:2px;background:#e4e4e4"></div>
<svg style="left:1017px;top:52px;" width="12" height="12" viewBox="0 0 12 12"><path d="M8.5 2.5 L3.5 6 L8.5 9.5Z" fill="#555"/></svg>
<div class="a" style="left:797px;top:77px;width:183px;height:26px;border:1px solid #a8a8a8;border-radius:3px;background:linear-gradient(#e8e8e8,#d8d8d8)"></div>
<div class="t" style="left:802px;top:86px;font-size:11.8px;color:#4a4a5a">Modus</div>
<div class="t" style="left:915px;top:86px;font-size:11.8px;color:#4a4a5a">Normal</div>
<svg style="left:963px;top:81px;" width="14" height="20" viewBox="0 0 14 20"><path d="M3.5 7.5 L7 4.5 L10.5 7.5Z M3.5 13 L7 16 L10.5 13Z" fill="#555"/></svg>
<div class="a" style="left:984px;top:77px;width:44px;height:26px;border:1px solid #a8a8a8;border-radius:3px;background:linear-gradient(#e8e8e8,#d8d8d8)"></div>
<svg style="left:984px;top:79px;" width="24" height="24" viewBox="0 0 24 24"><g transform="translate(1.5 1.2) scale(.85)"><path d="M13 17 H19 V4.5 H7.5 V10" fill="none" stroke="#c8a800" stroke-width="3.4"/><path d="M13 17 H19 V4.5 H7.5 V10" fill="none" stroke="#f6e040" stroke-width="1.8"/><path d="M3.6 9.8 L11.4 9.8 L7.5 13.8Z" fill="#f0d020" stroke="#c8a800" stroke-width=".9"/><circle cx="7.8" cy="17.2" r="3.2" fill="#3a6ab0" stroke="#1e4488" stroke-width=".9"/></g></svg>
<svg style="left:1012px;top:81px;" width="14" height="20" viewBox="0 0 14 20"><path d="M3.5 7.5 L7 4.5 L10.5 7.5Z M3.5 13 L7 16 L10.5 13Z" fill="#555"/></svg>
<div class="a" style="left:796px;top:106px;width:233px;height:20px;border:1px solid #9c9c9c;background:#fafafa"></div>
<div class="a" style="left:798px;top:108px;width:215px;height:16px;background:#aecdf0"></div>
<div class="t" style="left:799px;top:111px;font-size:11.4px;color:#333">Deckkraft</div>
<div class="t" style="left:983px;top:111px;font-size:11.4px;color:#333">100,0</div>
<div class="a" style="left:1016px;top:108px;width:11px;height:16px;background:#d2d2d2"></div>
<svg style="left:1015px;top:107px;" width="14" height="18" viewBox="0 0 14 18"><path d="M4 6.5 L7 4 L10 6.5Z" fill="#aaa"/><path d="M4 9.5 L7 12.5 L10 9.5Z" fill="#444"/></svg>
<div class="t" style="left:797px;top:134px;font-size:11.6px;color:#3c3c3c">Sperre:</div>
<div class="a" style="left:835px;top:127px;width:26px;height:26px;background:#d8d8d8"></div>
<svg style="left:838px;top:129px;" width="20" height="20" viewBox="0 0 20 20"><path d="M15 4 L17 6 L10 13 L8 11Z" fill="#a07850"/><path d="M14 3 L18 7" stroke="#e0a070" stroke-width="2.2"/><path d="M8 11 Q4 11 5 14 Q4 17 2 17 Q8 18 9.5 13.5Z" fill="#111"/></svg>
<svg style="left:866px;top:130px;" width="19" height="19" viewBox="0 0 19 19"><path d="M9.5 1.5 L13 5 L10.7 5 L10.7 8.3 L14 8.3 L14 6 L17.5 9.5 L14 13 L14 10.7 L10.7 10.7 L10.7 14 L13 14 L9.5 17.5 L6 14 L8.3 14 L8.3 10.7 L5 10.7 L5 13 L1.5 9.5 L5 6 L5 8.3 L8.3 8.3 L8.3 5 L6 5Z" fill="#6a98d4" stroke="#2a5598" stroke-width=".9"/></svg>
<div class="a" style="left:896px;top:132px;width:16px;height:16px;background:#8a8a8a;background-image:linear-gradient(45deg,#c2c2c2 25%,transparent 25%,transparent 75%,#c2c2c2 75%),linear-gradient(45deg,#c2c2c2 25%,transparent 25%,transparent 75%,#c2c2c2 75%);background-size:8px 8px;background-position:0 0,4px 4px"></div>
<div class="a" style="left:796px;top:155px;width:233px;height:335px;background:#fcfcfc;border:1px solid #a8a8a8"></div>
<div class="a" style="left:797px;top:156px;width:231px;height:38px;background:linear-gradient(#5ea4ee,#3f8ae0)"></div>
<div class="a" style="left:818px;top:156px;width:1px;height:76px;background:#c8c8c8"></div>
<div class="a" style="left:840px;top:156px;width:1px;height:76px;background:#c8c8c8"></div>
<div class="a" style="left:818px;top:156px;width:1px;height:38px;background:#2f6cb4"></div>
<div class="a" style="left:840px;top:156px;width:1px;height:38px;background:#2f6cb4"></div>
<svg style="left:800px;top:168px;" width="16" height="14" viewBox="0 0 16 14"><path d="M2 7 Q8 1 14 7 Q8 12 2 7Z" fill="#fff" stroke="#555" stroke-width=".8"/><circle cx="8" cy="7" r="2.6" fill="#2a5a9a"/><circle cx="7.2" cy="6" r=".9" fill="#fff"/></svg>
<svg style="left:800px;top:206px;" width="16" height="14" viewBox="0 0 16 14"><path d="M2 7 Q8 1 14 7 Q8 12 2 7Z" fill="#fff" stroke="#555" stroke-width=".8"/><circle cx="8" cy="7" r="2.6" fill="#2a5a9a"/><circle cx="7.2" cy="6" r=".9" fill="#fff"/></svg>
<div class="a" style="left:857px;top:157px;width:36px;height:36px;background:#fff"></div>
<div class="a" style="left:859px;top:159px;width:32px;height:32px;background:#999;background-image:linear-gradient(45deg,#666 25%,transparent 25%,transparent 75%,#666 75%),linear-gradient(45deg,#666 25%,transparent 25%,transparent 75%,#666 75%);background-size:8px 8px;background-position:0 0,4px 4px"></div>
<div class="a" style="left:860px;top:160px;width:30px;height:30px;border-radius:50%;background:conic-gradient(from 0deg,#d6c058 0deg,#f5ea78 55deg,#8a6a20 100deg,#1e2008 129deg,#b39c40 173deg,#f5ea78 203deg,#bf9d3c 233deg,#dcc860 270deg,#1e2008 309deg,#d6c058 360deg);-webkit-mask:radial-gradient(circle,transparent 11.5px,#000 12.3px);mask:radial-gradient(circle,transparent 11.5px,#000 12.3px)"></div>
<div class="t" style="left:897px;top:169px;font-size:12.2px;color:#fff">Ring</div>
<div class="a" style="left:857px;top:195px;width:36px;height:36px;background:#000"></div>
<div class="t" style="left:897px;top:207px;font-size:11.8px;font-weight:bold;color:#222">Hintergrund</div>
<svg style="left:797px;top:493px;" width="24" height="24" viewBox="0 0 24 24"><path d="M6 5 H14 L18 9 V21 H6Z" fill="#eeeeec" stroke="#888" stroke-width=".8"/><path d="M6.5 3 v6 M3.5 6 h6" stroke="#111" stroke-width="1.8"/></svg>
<svg style="left:826px;top:493px;" width="24" height="24" viewBox="0 0 24 24"><path d="M4 10 H10 L12 12 H20 V21 H4Z" fill="#6a9ee0" stroke="#3465a4" stroke-width=".8"/><path d="M7.5 4 v6 M4.5 7 h6" stroke="#111" stroke-width="1.8"/></svg>
<svg style="left:855px;top:493px;" width="24" height="24" viewBox="0 0 24 24"><path d="M6 15 L12 9 L18 15" fill="none" stroke="#c4c0b8" stroke-width="2.6"/></svg>
<svg style="left:884px;top:493px;" width="24" height="24" viewBox="0 0 24 24"><path d="M6 9 L12 15 L18 9" fill="none" stroke="#f07800" stroke-width="2.6"/></svg>
<svg style="left:913px;top:493px;" width="24" height="24" viewBox="0 0 24 24"><rect x="7" y="8" width="13" height="12" fill="#fff" stroke="#333" stroke-width="1"/><rect x="4" y="4" width="13" height="12" fill="#eee" stroke="#333" stroke-width="1"/><rect x="6" y="6" width="9" height="7" fill="#3465a4"/></svg>
<svg style="left:942px;top:493px;" width="24" height="24" viewBox="0 0 24 24"><g stroke="#666" stroke-width=".8" fill="#f4f4f4"><path d="M3 15 L6 13 L15 13 L12 16Z"/><path d="M3 12 L6 10 L15 10 L12 13Z"/><path d="M3 9 L6 7 L15 7 L12 10Z"/></g><path d="M18 6 V16 M15.5 13.5 L18 16 L20.5 13.5" stroke="#2a5598" stroke-width="1.3" fill="none"/></svg>
<svg style="left:971px;top:493px;" width="24" height="24" viewBox="0 0 24 24"><rect x="4" y="4" width="12" height="11" fill="#eee" stroke="#aaa"/><path d="M7 14 L10 18 H21 L18 12Z" fill="#e8e8e8" stroke="#aaa"/><circle cx="9" cy="9" r="2" fill="#ccc"/></svg>
<svg style="left:1002px;top:493px;" width="24" height="24" viewBox="0 0 24 24"><path d="M6 6 L18 18 M18 6 L6 18" stroke="#d40000" stroke-width="3.2"/></svg>
<div class="a" style="left:909px;top:523px;width:1px;height:5px;background:#a0a0a0"></div>
<div class="a" style="left:912px;top:523px;width:1px;height:5px;background:#a0a0a0"></div>
<div class="a" style="left:915px;top:523px;width:1px;height:5px;background:#a0a0a0"></div>
<div class="a" style="left:791px;top:532px;width:27px;height:24px;background:#d0d0d0;border:1px solid #c0c0c0;border-bottom:none;border-radius:3px 3px 0 0"></div>
<div class="a" style="left:821px;top:532px;width:28px;height:24px;background:#d0d0d0;border:1px solid #c0c0c0;border-bottom:none;border-radius:3px 3px 0 0"></div>
<div class="a" style="left:882px;top:532px;width:27px;height:24px;background:#d0d0d0;border:1px solid #c0c0c0;border-bottom:none;border-radius:3px 3px 0 0"></div>
<div class="a" style="left:911px;top:532px;width:26px;height:24px;background:#d0d0d0;border:1px solid #c0c0c0;border-bottom:none;border-radius:3px 3px 0 0"></div>
<div class="a" style="left:791px;top:555px;width:242px;height:188px;background:#d9d9d9;border:1px solid #b9b9b9;border-bottom:none;border-radius:0 3px 0 0"></div>
<div class="a" style="left:851px;top:529px;width:28px;height:27px;background:#d9d9d9;border:1px solid #b9b9b9;border-bottom:none;border-radius:3px 3px 0 0"></div>
<div class="a" style="left:796px;top:535px;width:19px;height:19px;background:#fff;border:1.5px solid #111"></div>
<svg style="left:796px;top:535px;" width="19" height="19" viewBox="0 0 19 19"><path d="M9.5 3 L11.3 7.8 L16 7.8 L12.2 10.7 L13.6 15.5 L9.5 12.5 L5.4 15.5 L6.8 10.7 L3 7.8 L7.7 7.8Z" fill="#111"/><rect x="14" y="14" width="3" height="3" fill="#3465a4"/></svg>
<div class="a" style="left:825px;top:535px;width:19px;height:19px;border:1.5px solid #111;background:linear-gradient(90deg,#888,#ddd 50%,#aaa 75%,#111 80%)"></div>
<div class="a" style="left:855px;top:534px;width:19px;height:19px;border:1.5px solid #111;background:linear-gradient(90deg,#3a3000,#a89030 25%,#f4e878 50%,#c8b048 75%,#3a3000)"></div>
<div class="a" style="left:885px;top:535px;width:19px;height:19px;background:#fff;border:1.5px solid #111"></div>
<div class="t" style="left:887px;top:540px;font-size:11px;font-family:'Liberation Serif';color:#111">Aa</div>
<svg style="left:913px;top:533px;" width="22" height="22" viewBox="0 0 22 22"><path d="M4 10 Q3 3 11 3 Q19 3 19 9 Q19 13 15 12 Q12 12 13 16 Q12 20 8 19 Q4 17 4 10Z" fill="#e8c890" stroke="#b09050" stroke-width=".8"/><circle cx="14" cy="7" r="2" fill="#3465a4"/><circle cx="16" cy="11.5" r="1.8" fill="#6ad030"/><circle cx="9" cy="15" r="2" fill="#e02020"/></svg>
<div class="a" style="left:1017px;top:536px;width:12px;height:12px;border:1px solid #777;border-radius:2px;background:#e4e4e4"></div>
<svg style="left:1017px;top:536px;" width="12" height="12" viewBox="0 0 12 12"><path d="M8.5 2.5 L3.5 6 L8.5 9.5Z" fill="#555"/></svg>
<div class="a" style="left:797px;top:561px;width:231px;height:23px;border:1px solid #a8a8a8;border-radius:3px;background:#fcfcfc"></div>
<div class="t" style="left:801px;top:567px;font-size:11.4px;font-style:italic;color:#8a8a8a">Filter</div>
<svg style="left:1010px;top:566px;" width="14" height="14" viewBox="0 0 14 14"><path d="M2.5 4.5 L11.5 4.5 L7 9.5Z" fill="#555"/></svg>
<div class="t" style="left:797px;top:590px;font-size:11px;font-style:italic;color:#3c3c3c">Golden</div>
<div class="a" style="left:796px;top:605px;width:233px;height:78px;background:#fff;border:1px solid #a8a8a8"></div>
<div class="a" style="left:1013px;top:606px;width:15px;height:76px;background:#f0f0f0"></div>
<div class="a" style="left:1016px;top:621px;width:9px;height:50px;border:1px solid #888;border-radius:5px;background:#dcdcdc"></div>
<div class="a" style="left:798px;top:606px;width:32px;height:8px;background-image:linear-gradient(90deg,transparent 50%,rgba(220,140,60,.8) 70%,rgba(90,120,200,.8) 85%,rgba(200,80,200,.8)),linear-gradient(45deg,#6a6a6a 25%,transparent 25%,transparent 75%,#6a6a6a 75%),linear-gradient(45deg,#6a6a6a 25%,transparent 25%,transparent 75%,#6a6a6a 75%);background-size:100% 100%,8px 8px,8px 8px;background-position:0 0,0 0,4px 4px;background-color:#a8a8a8"></div>
<div class="a" style="left:832px;top:606px;width:32px;height:8px;background-image:linear-gradient(90deg,rgba(240,170,170,.7),rgba(200,90,90,.5) 30%,transparent 60%,rgba(220,120,120,.5)),linear-gradient(45deg,#6a6a6a 25%,transparent 25%,transparent 75%,#6a6a6a 75%),linear-gradient(45deg,#6a6a6a 25%,transparent 25%,transparent 75%,#6a6a6a 75%);background-size:100% 100%,8px 8px,8px 8px;background-position:0 0,0 0,4px 4px;background-color:#a8a8a8"></div>
<div class="a" style="left:866px;top:606px;width:32px;height:8px;background-image:linear-gradient(90deg,transparent 70%,rgba(230,140,140,.7)),linear-gradient(45deg,#6a6a6a 25%,transparent 25%,transparent 75%,#6a6a6a 75%),linear-gradient(45deg,#6a6a6a 25%,transparent 25%,transparent 75%,#6a6a6a 75%);background-size:100% 100%,8px 8px,8px 8px;background-position:0 0,0 0,4px 4px;background-color:#a8a8a8"></div>
<div class="a" style="left:900px;top:606px;width:32px;height:8px;background-image:linear-gradient(90deg,#fff 15%,rgba(255,255,255,0) 30%,rgba(220,100,100,.6) 40%,transparent 60%),linear-gradient(45deg,#6a6a6a 25%,transparent 25%,transparent 75%,#6a6a6a 75%),linear-gradient(45deg,#6a6a6a 25%,transparent 25%,transparent 75%,#6a6a6a 75%);background-size:100% 100%,8px 8px,8px 8px;background-position:0 0,0 0,4px 4px;background-color:#a8a8a8"></div>
<div class="a" style="left:934px;top:606px;width:32px;height:8px;background-image:linear-gradient(90deg,rgba(230,60,60,.9),rgba(230,100,100,.4) 40%,transparent 60%,rgba(230,120,120,.5)),linear-gradient(45deg,#6a6a6a 25%,transparent 25%,transparent 75%,#6a6a6a 75%),linear-gradient(45deg,#6a6a6a 25%,transparent 25%,transparent 75%,#6a6a6a 75%);background-size:100% 100%,8px 8px,8px 8px;background-position:0 0,0 0,4px 4px;background-color:#a8a8a8"></div>
<div class="a" style="left:968px;top:606px;width:32px;height:8px;background-image:linear-gradient(90deg,rgba(240,200,200,.6),rgba(240,120,120,.9)),linear-gradient(45deg,#6a6a6a 25%,transparent 25%,transparent 75%,#6a6a6a 75%),linear-gradient(45deg,#6a6a6a 25%,transparent 25%,transparent 75%,#6a6a6a 75%);background-size:100% 100%,8px 8px,8px 8px;background-position:0 0,0 0,4px 4px;background-color:#a8a8a8"></div>
<div class="a" style="left:798px;top:616px;width:32px;height:32px;background-image:linear-gradient(90deg,rgba(255,255,255,0),rgba(255,255,255,.45)),linear-gradient(45deg,#6a6a6a 25%,transparent 25%,transparent 75%,#6a6a6a 75%),linear-gradient(45deg,#6a6a6a 25%,transparent 25%,transparent 75%,#6a6a6a 75%);background-size:100% 100%,8px 8px,8px 8px;background-position:0 0,0 0,4px 4px;background-color:#a8a8a8"></div>
<div class="a" style="left:832px;top:616px;width:32px;height:32px;background-image:linear-gradient(90deg,transparent 20%,rgba(230,140,140,.6) 50%,transparent 80%),linear-gradient(45deg,#6a6a6a 25%,transparent 25%,transparent 75%,#6a6a6a 75%),linear-gradient(45deg,#6a6a6a 25%,transparent 25%,transparent 75%,#6a6a6a 75%);background-size:100% 100%,8px 8px,8px 8px;background-position:0 0,0 0,4px 4px;background-color:#a8a8a8"></div>
<div class="a" style="left:866px;top:616px;width:32px;height:32px;background-image:linear-gradient(90deg,#fff,#333 8%,#ddd 18%,#777 28%,#f4f4f4 40%,#444 50%,#aaa 58%,#333 66%,#eee 78%,#222 90%,#fff);"></div>
<div class="a" style="left:900px;top:616px;width:32px;height:32px;background-image:linear-gradient(90deg,#606060,#fff);"></div>
<div class="a" style="left:934px;top:616px;width:32px;height:32px;background-image:linear-gradient(90deg,#111,#eee 15%,#111 28%,#ddd 40%,#111 52%,#eee 65%,#111 78%,#ddd 90%,#111);"></div>
<div class="a" style="left:968px;top:616px;width:32px;height:32px;background-image:linear-gradient(90deg,#ff0000,#ff8000 12%,#ffff00 25%,#00ff00 40%,#00ffff 55%,#0000ff 70%,#ff00ff 85%,#ff0000);"></div>
<div class="a" style="left:798px;top:650px;width:32px;height:32px;background-image:linear-gradient(90deg,#ff0000,#ff00ff 18%,#0000ff 35%,#00ffff 50%,#00ff00 68%,#ffff00 84%,#ff0000);"></div>
<div class="a" style="left:832px;top:650px;width:32px;height:32px;background-image:linear-gradient(90deg,#000,#ff0000 50%,#ffff00);"></div>
<div class="a" style="left:866px;top:650px;width:32px;height:32px;background-image:linear-gradient(90deg,#2a2400,#8a7020 15%,#d8c050 30%,#f4e878 45%,#c0a040 60%,#d8c458 75%,#8a6a20 90%,#2a2400);"></div>
<div class="a" style="left:900px;top:650px;width:32px;height:32px;background-image:linear-gradient(90deg,#1a3a1a,#60a040 20%,#2a4a2a 40%,#303828 55%,#60a040 75%,#1a3a1a);"></div>
<div class="a" style="left:934px;top:650px;width:32px;height:32px;background-image:linear-gradient(90deg,#2a6aa0,#fff 45%,#fff 50%,#f0c080 55%,#804020);"></div>
<div class="a" style="left:968px;top:650px;width:32px;height:32px;background-image:linear-gradient(90deg,#2a6a9a,#a0d0f0 45%,#2a6a9a 50%,#a0e0ff 55%,#102040);"></div>
<div class="a" style="left:865px;top:649px;width:34px;height:34px;border:1.5px solid #111"></div>
<div class="a" style="left:797px;top:688px;width:231px;height:22px;border:1px solid #a8a8a8;border-radius:3px;background:#fcfcfc"></div>
<div class="t" style="left:800px;top:693px;font-size:11.2px;font-style:italic;color:#8a8a8a">Stichworte eingeben</div>
<svg style="left:1010px;top:692px;" width="14" height="14" viewBox="0 0 14 14"><path d="M2.5 4.5 L11.5 4.5 L7 9.5Z" fill="#555"/></svg>
<svg style="left:807px;top:714px;" width="24" height="24" viewBox="0 0 24 24"><path d="M6 20 L6 7 L15 7 L18 10 L18 20Z" fill="#f4f4f4" stroke="#888" stroke-width=".8"/><path d="M9 16 L15 10 L16.5 11.5 L10.5 17.5 L8.5 18Z" fill="#e0a040" stroke="#805010" stroke-width=".7"/></svg>
<svg style="left:853px;top:714px;" width="24" height="24" viewBox="0 0 24 24"><path d="M6 5 H14 L18 9 V21 H6Z" fill="#eeeeec" stroke="#888" stroke-width=".8"/><path d="M6.5 3 v6 M3.5 6 h6" stroke="#111" stroke-width="1.8"/></svg>
<svg style="left:899px;top:714px;" width="24" height="24" viewBox="0 0 24 24"><rect x="7" y="8" width="13" height="12" fill="#fff" stroke="#333" stroke-width="1"/><rect x="4" y="4" width="13" height="12" fill="#eee" stroke="#333" stroke-width="1"/><rect x="6" y="6" width="9" height="7" fill="#3465a4"/></svg>
<svg style="left:946px;top:714px;" width="24" height="24" viewBox="0 0 24 24"><path d="M7 7 L17 17 M17 7 L7 17" stroke="#a8a8a8" stroke-width="2.8"/></svg>
<svg style="left:994px;top:714px;" width="24" height="24" viewBox="0 0 24 24"><path d="M16.5 15 A5.8 5.8 0 1 1 16 8" fill="none" stroke="#6ac820" stroke-width="2.6"/><path d="M13 10 L19 10 L19 4Z" fill="#6ac820"/></svg>
</body></html>
